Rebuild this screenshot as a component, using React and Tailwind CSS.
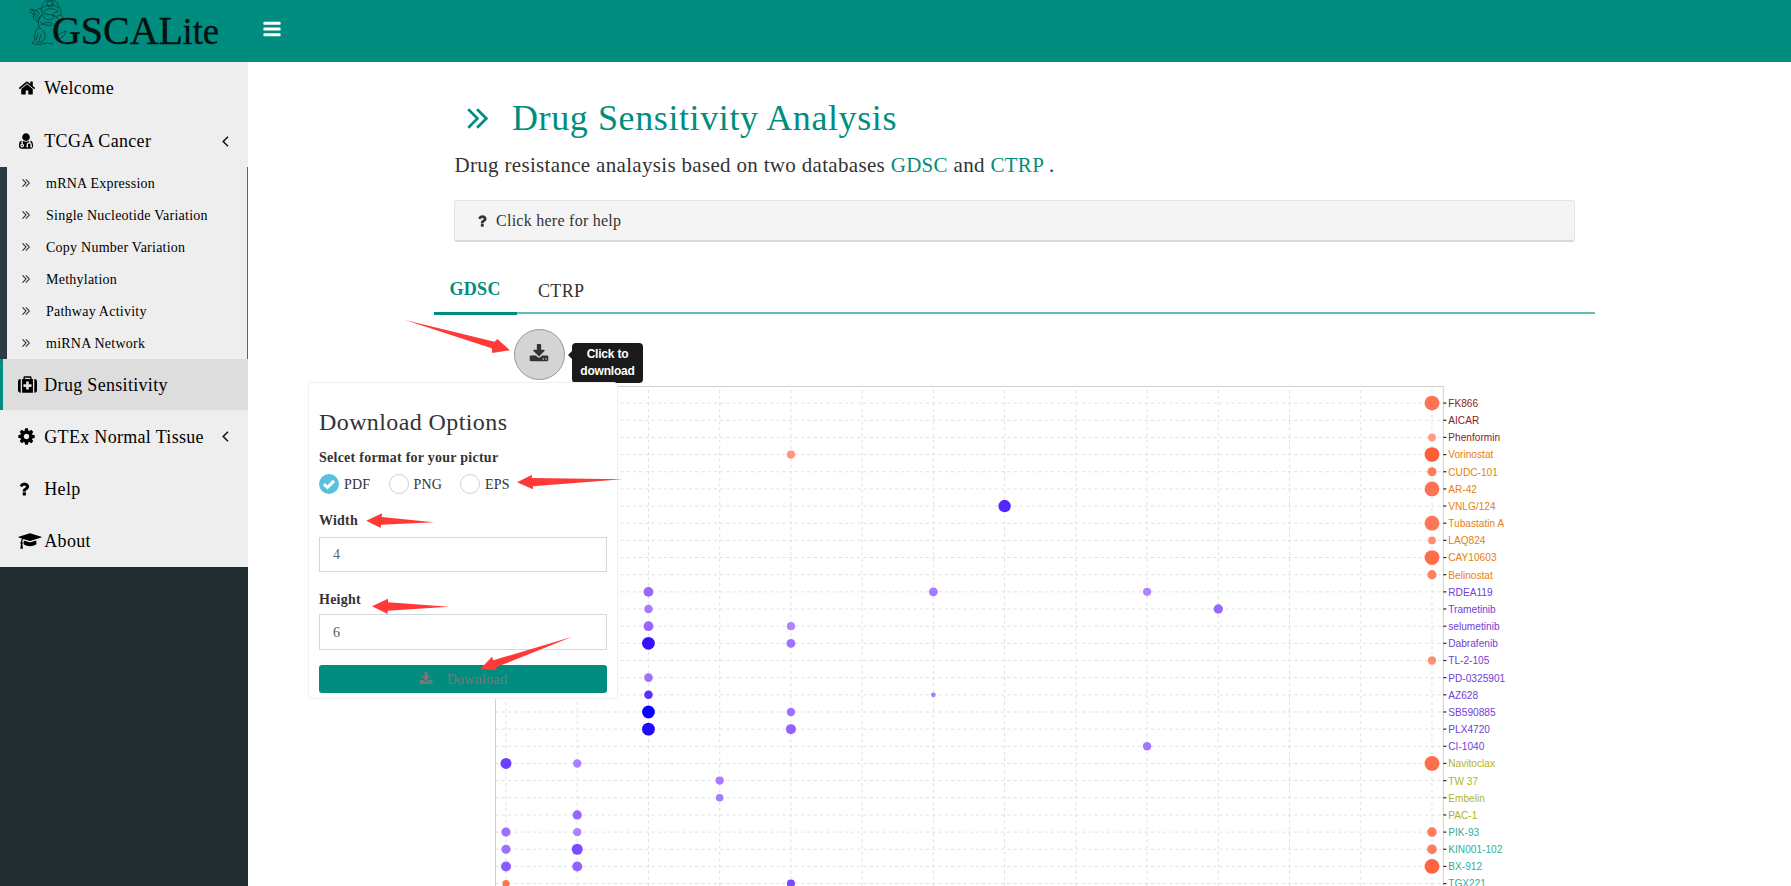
import React from 'react';

const ICONS = {
  home: ['0 0 1792 1792', 'M1472 992v480q0 26-19 45t-45 19h-384v-384h-256v384h-384q-26 0-45-19t-19-45v-480q0-1 .5-3t.5-3l575-474 575 474q1 2 1 6zm223-69l-62 74q-8 9-21 11h-3q-13 0-21-7l-692-577-692 577q-12 8-24 7-13-2-21-11l-62-74q-8-10-7-23.5t11-21.5l719-599q32-26 76-26t76 26l244 204v-195q0-14 9-23t23-9h192q14 0 23 9t9 23v408l219 182q10 8 11 21.5t-7 23.5z'],
  bars: ['0 0 1792 1792', 'M1664 1344v128q0 26-19 45t-45 19h-1408q-26 0-45-19t-19-45v-128q0-26 19-45t45-19h1408q26 0 45 19t19 45zm0-512v128q0 26-19 45t-45 19h-1408q-26 0-45-19t-19-45v-128q0-26 19-45t45-19h1408q26 0 45 19t19 45zm0-512v128q0 26-19 45t-45 19h-1408q-26 0-45-19t-19-45v-128q0-26 19-45t45-19h1408q26 0 45 19t19 45z'],
  cog: ['0 0 1792 1792', 'M1152 896q0-106-75-181t-181-75-181 75-75 181 75 181 181 75 181-75 75-181zm512-109v222q0 12-8 23t-20 13l-185 28q-19 54-39 91 35 50 107 138 10 12 10 25t-9 23q-27 37-99 108t-94 71q-12 0-26-9l-138-108q-44 23-91 38-16 136-29 186-7 28-36 28h-222q-14 0-24.5-8.5t-11.5-21.5l-28-184q-49-16-90-37l-141 107q-10 9-25 9-14 0-25-11-126-114-165-168-7-10-7-23 0-12 8-23 15-21 51-66.5t54-70.5q-27-50-41-99l-183-27q-13-2-21-12.5t-8-23.5v-222q0-12 8-23t19-13l186-28q14-46 39-92-40-57-107-138-10-12-10-24 0-10 9-23 26-36 98.5-107.5t94.5-71.5q13 0 26 10l138 107q44-23 91-38 16-136 29-186 7-28 36-28h222q14 0 24.5 8.5t11.5 21.5l28 184q49 16 90 37l142-107q9-9 24-9 13 0 25 10 129 119 165 170 7 8 7 22 0 12-8 23-15 21-51 66.5t-54 70.5q26 50 41 98l183 28q13 2 21 12.5t8 23.5z'],
  question: ['0 0 1792 1792', 'M1088 1256v240q0 16-12 28t-28 12h-240q-16 0-28-12t-12-28v-240q0-16 12-28t28-12h240q16 0 28 12t12 28zm316-600q0 54-15.5 101t-35 76.5-55 59.5-57.5 43.5-61 35.5q-41 23-68.5 65t-27.5 67q0 17-12 32.5t-28 15.5h-240q-15 0-25.5-18.5t-10.5-37.5v-45q0-83 65-156.5t143-108.5q59-27 84-56t25-76q0-42-46.5-74t-107.5-32q-65 0-108 29-35 25-107 115-13 16-31 16-12 0-25-8l-164-125q-13-10-15.5-25t5.5-28q160-266 464-266 80 0 161 31t146 83 106 127.5 41 158.5z'],
  download: ['0 0 1792 1792', 'M1344 1344q0-26-19-45t-45-19-45 19-19 45 19 45 45 19 45-19 19-45zm256 0q0-26-19-45t-45-19-45 19-19 45 19 45 45 19 45-19 19-45zm128-224v320q0 40-28 68t-68 28h-1472q-40 0-68-28t-28-68v-320q0-40 28-68t68-28h465l135 136q58 56 136 56t136-56l136-136h464q40 0 68 28t28 68zm-325-569q17 41-14 70l-448 448q-18 19-45 19t-45-19l-448-448q-31-29-14-70 17-39 59-39h256v-448q0-26 19-45t45-19h256q26 0 45 19t19 45v448h256q42 0 59 39z'],
  cap: ['0 0 2304 1792', 'M1774 836l18 316q4 69-82 128t-235 93.5-323 34.5-323-34.5-235-93.5-82-128l18-316 574 181q22 7 48 7t48-7zm530-324q0 23-22 31l-1120 352q-4 1-10 1t-10-1l-652-206q-43 34-71 111.5t-34 178.5q63 36 63 109 0 69-58 107l58 433q2 14-8 25-9 11-24 11h-192q-15 0-24-11-10-11-8-25l58-433q-58-38-58-107 0-73 65-111 11-207 98-330l-333-104q-22-8-22-31t22-31l1120-352q4-1 10-1t10 1l1120 352q22 8 22 31z'],
  doctor: ['0 0 1792 1792', 'M576 1344q0 26-19 45t-45 19-45-19-19-45 19-45 45-19 45 19 19 45zM1600 1405q0 121-73 190t-194 69h-874q-121 0-194-69t-73-190q0-68 5.5-131t24-138 47.5-132.5 81-103 120-60.5q-22 52-22 120v203q-58 20-93 70t-35 111q0 80 56 136t136 56 136-56 56-136q0-61-35.5-111t-92.5-70v-203q0-62 25-93 132 104 295 104t295-104q25 31 25 93v64q-106 0-181 75t-75 181v89q-32 29-32 71 0 40 28 68t68 28 68-28 28-68q0-42-32-71v-89q0-52 38-90t90-38 90 38 38 90v89q-32 29-32 71 0 40 28 68t68 28 68-28 28-68q0-42-32-71v-89q0-68-34.5-127.5t-93.5-93.5q0-10 .5-42.5t0-48-2.5-41.5-7-47-13-40q68 15 120 60.5t81 103 47.5 132.5 24 138 5.5 131zM1280 512q0 159-112.5 271.5t-271.5 112.5-271.5-112.5-112.5-271.5 112.5-271.5 271.5-112.5 271.5 112.5 112.5 271.5z'],
  medkit: ['0 0 1792 1792', 'M1280 1088v-192q0-14-9-23t-23-9h-224v-224q0-14-9-23t-23-9h-192q-14 0-23 9t-9 23v224h-224q-14 0-23 9t-9 23v192q0 14 9 23t23 9h224v224q0 14 9 23t23 9h192q14 0 23-9t9-23v-224h224q14 0 23-9t9-23zm-640-704h512v-128h-512v128zm-384 0v1280h-32q-92 0-158-66t-66-158v-832q0-92 66-158t158-66h32zm1152 0v1280h-1024v-1280h128v-160q0-40 28-68t68-28h576q40 0 68 28t28 68v160h128zm384 224v832q0 92-66 158t-158 66h-32v-1280h32q92 0 158 66t66 158z'],
};

function Icon({ name, className }) {
  const [viewBox, d] = ICONS[name];
  return (
    <svg viewBox={viewBox} className={className} fill="currentColor" aria-hidden="true">
      <path d={d} />
    </svg>
  );
}

function DoubleAngle({ className, stroke = 1.3 }) {
  return (
    <svg viewBox="0 0 10 10" className={className} fill="none" stroke="currentColor" strokeWidth={stroke} aria-hidden="true">
      <path d="M0.6 0.6 L5 5 L0.6 9.4 M4.8 0.6 L9.2 5 L4.8 9.4" />
    </svg>
  );
}

function AngleLeft() {
  return (
    <svg viewBox="0 0 7 11" className="h-[11px] w-[7px]" fill="none" stroke="#111" strokeWidth="1.5" aria-hidden="true">
      <path d="M6 0.7 L1.2 5.5 L6 10.3" />
    </svg>
  );
}

function Logo() {
  return (
    <svg viewBox="0 0 200 62" className="ml-[28px] h-[62px] w-[200px]" aria-label="GSCALite">
      <g fill="none" stroke="#06332e" strokeWidth="0.7" strokeLinecap="round" strokeLinejoin="round">
        <path d="M13 9 Q14 2 20 0 Q29 -1 31 7 Q34 9 33 15 Q28 18 24 15 Q17 15 14 12 Z" />
        <path d="M14 8 Q22 2 31 8 M16 11 Q22 6 30 11 M24 15 Q25 12 30 12" />
        <circle cx="22" cy="4" r="3" />
        <path d="M14 9 Q11 7 8 11 L3 9 L2 12 L6 14 L5 18 L9 22 L14 15" />
        <path d="M4 10 L10 16 M7 10 L12 14 M5 14 L10 19" />
        <path d="M12 16 Q9 21 11 27 Q5 33 7 40 L4 43 Q8 46 13 44 Q20 42 25 44" />
        <path d="M33 15 Q36 17 35 20 Q32 25 26 26 M28 17 L33 21" />
        <path d="M14 14 Q17 22 24 19 Q27 17 26 15 M13 25 Q20 20 25 24" />
        <path d="M10 27 Q18 30 17 38 Q14 44 8 42 M12 22 Q18 27 24 25 M10 33 L8 40 M13 34 L11 41" />
        <path d="M29 40 Q37 37 38 31 Q32 33 27 37" />
      </g>
      <g fontFamily="'Liberation Serif', serif" fill="#04110f" stroke="#04110f" strokeWidth="0.35">
        <text x="24" y="43.5" textLength="131" lengthAdjust="spacingAndGlyphs" fontSize="39.5">GSCAL</text>
        <text x="154.5" y="43.5" textLength="36.5" lengthAdjust="spacingAndGlyphs" fontSize="37">ite</text>
      </g>
    </svg>
  );
}

function NavItem({ icon, iconClass, label, arrow, active }) {
  return (
    <div className={active
      ? 'flex h-[51.5px] shrink-0 items-center border-l-[3px] border-[#008d80] bg-[#ddd] pl-[15px]'
      : 'flex h-[52.15px] shrink-0 items-center bg-[#eee] pl-[18px]'}>
      <span className="flex w-[26.3px] shrink-0 items-center">
        <Icon name={icon} className={iconClass} />
      </span>
      <span className="whitespace-nowrap text-[18px] leading-[24px] tracking-[0.31px]">{label}</span>
      {arrow && <span className="mr-[19.5px] ml-auto"><AngleLeft /></span>}
    </div>
  );
}

const SUB_ITEMS = ['mRNA Expression', 'Single Nucleotide Variation', 'Copy Number Variation', 'Methylation', 'Pathway Activity', 'miRNA Network'];

function Sidebar() {
  return (
    <aside className="flex w-[248px] shrink-0 flex-col bg-[#222d32] text-black">
      <NavItem icon="home" iconClass="size-[18px] shrink-0" label="Welcome" />
      <div className="bg-[#eee] pt-px">
        <NavItem icon="doctor" iconClass="-ml-px size-[18px] shrink-0" label="TCGA Cancer" arrow />
      </div>
      <ul className="h-[191.7px] shrink-0 border-r border-l-[7px] border-r-[#5a656a] border-l-[#2c3b41] bg-[#eee]">
        {SUB_ITEMS.map((item) => (
          <li key={item} className="flex h-[32px] items-center pl-[14.5px]">
            <DoubleAngle className="h-[8px] w-[8px] text-[#222]" />
            <span className="ml-[16.5px] whitespace-nowrap text-[14px] tracking-[0.24px]">{item}</span>
          </li>
        ))}
      </ul>
      <NavItem icon="medkit" iconClass="size-[19px] shrink-0" label="Drug Sensitivity" active />
      <NavItem icon="cog" iconClass="-ml-px size-[19px] shrink-0" label="GTEx Normal Tissue" arrow />
      <NavItem icon="question" iconClass="-ml-[3px] size-[18px] shrink-0" label="Help" />
      <NavItem icon="cap" iconClass="h-[18px] w-[24px] shrink-0" label="About" />
    </aside>
  );
}

const DRUGS = [
  ['FK866', '#8b1a1a'], ['AICAR', '#8b1a1a'], ['Phenformin', '#8b1a1a'],
  ['Vorinostat', '#e67f0d'], ['CUDC-101', '#e67f0d'], ['AR-42', '#e67f0d'], ['VNLG/124', '#e67f0d'],
  ['Tubastatin A', '#e67f0d'], ['LAQ824', '#e67f0d'], ['CAY10603', '#e67f0d'], ['Belinostat', '#e67f0d'],
  ['RDEA119', '#7040d8'], ['Trametinib', '#7040d8'], ['selumetinib', '#7040d8'], ['Dabrafenib', '#7040d8'],
  ['TL-2-105', '#7040d8'], ['PD-0325901', '#7040d8'], ['AZ628', '#7040d8'], ['SB590885', '#7040d8'],
  ['PLX4720', '#7040d8'], ['CI-1040', '#7040d8'],
  ['Navitoclax', '#b0b428'], ['TW 37', '#b0b428'], ['Embelin', '#b0b428'], ['PAC-1', '#b0b428'],
  ['PIK-93', '#2fae9c'], ['KIN001-102', '#2fae9c'], ['BX-912', '#2fae9c'], ['TGX221', '#2fae9c'],
];

// [column, row, radius, colour]
const DOTS = [
  [13, 0, 7.4, '#ff7352'], [13, 2, 3.9, '#ff9b80'], [13, 3, 7.4, '#ff5d3a'], [13, 4, 4.6, '#ff7d5f'],
  [13, 5, 7.4, '#ff7352'], [13, 7, 7.4, '#ff7656'], [13, 8, 3.9, '#ff8f74'], [13, 9, 7.4, '#ff6d4b'],
  [13, 10, 4.6, '#ff8062'], [13, 15, 4.2, '#ff8e72'], [13, 21, 7.4, '#ff6d4b'], [13, 25, 4.8, '#ff7d5e'],
  [13, 26, 4.8, '#ff7d5e'], [13, 27, 7.4, '#ff6341'],
  [4, 3, 4.1, '#ff957a'], [7, 6, 6.2, '#5228ff'],
  [2, 11, 4.9, '#9766ff'], [2, 12, 4.3, '#a67bff'], [2, 13, 4.9, '#9766ff'], [2, 14, 6.4, '#3712ff'],
  [2, 16, 4.3, '#9f71ff'], [2, 17, 4.3, '#5a2eff'], [2, 18, 6.4, '#0a00ff'], [2, 19, 6.4, '#220aff'],
  [4, 13, 4.1, '#ad86ff'], [4, 14, 4.4, '#9f71ff'], [4, 18, 4.2, '#9f71ff'], [4, 19, 5, '#9261ff'],
  [6, 11, 4.4, '#a67bff'], [6, 17, 2.4, '#a67bff'], [9, 11, 4.1, '#ad86ff'], [10, 12, 4.7, '#9968ff'],
  [9, 20, 4.2, '#a276ff'], [0, 21, 5.5, '#6c3eff'], [1, 21, 4.2, '#a981ff'],
  [3, 22, 4.1, '#a67cff'], [3, 23, 3.8, '#a67cff'], [1, 24, 4.6, '#9765ff'],
  [0, 25, 4.6, '#9e70ff'], [1, 25, 4.2, '#ab84ff'], [0, 26, 4.6, '#9e70ff'], [1, 26, 5.5, '#7c4bff'],
  [0, 27, 5, '#8d5cff'], [1, 27, 5, '#9462ff'], [0, 28, 3.6, '#ff7352'], [4, 28, 4, '#7948ff'],
];

const colX = (i) => 11 + i * 71.23;
const rowY = (i) => 17.1 + i * 17.16;

function BubbleChart() {
  return (
    <svg width="1040" height="500" viewBox="0 0 1040 500" className="block shrink-0">
      <g stroke="#e0e0e0" strokeDasharray="3.12 3.12" strokeWidth="1">
        {DRUGS.map(([name], i) => <line key={name} x1="0.5" x2="948" y1={rowY(i)} y2={rowY(i)} />)}
        {Array.from({ length: 14 }, (_, i) => <line key={i} x1={colX(i)} x2={colX(i)} y1="500" y2="0" />)}
      </g>
      <path d="M0.5 500 V0.5 H948.3 V500" fill="none" stroke="#cfcfcf" strokeWidth="1" />
      {DRUGS.map(([name, color], i) => (
        <g key={name}>
          <line x1="948.3" x2="951.3" y1={rowY(i)} y2={rowY(i)} stroke="#222" strokeWidth="1.2" />
          <text x="953.3" y={rowY(i) + 3.9} fill={color} fontSize="10.15" fontFamily="'Liberation Sans', sans-serif">{name}</text>
        </g>
      ))}
      {DOTS.map(([c, r, radius, color]) => <circle key={c + '-' + r} cx={colX(c)} cy={rowY(r)} r={radius} fill={color} />)}
    </svg>
  );
}

function Radio({ label, checked }) {
  return (
    <span className="flex items-center gap-[5px]">
      {checked ? (
        <svg viewBox="0 0 20 20" className="size-[20px]">
          <circle cx="10" cy="10" r="10" fill="#5bc0de" />
          <path d="M4.9 10.2 L8.4 13.5 L15 6.9" fill="none" stroke="#fff" strokeWidth="3" />
        </svg>
      ) : (
        <span className="size-[20px] rounded-full border border-[#ccd0d4] bg-white" />
      )}
      <span className="text-[14px] tracking-[0.2px]">{label}</span>
    </span>
  );
}

function DownloadPanel() {
  return (
    <section className="absolute top-[382px] left-[308px] flex h-[317px] w-[310px] flex-col rounded-[4px] border border-[#f0f0f0] bg-white px-[10px] text-[#333]">
      <h3 className="mt-[24px] text-[24px] leading-[30px] tracking-[0.4px]">Download Options</h3>
      <p className="mt-[11px] text-[14px] leading-[20px] font-bold tracking-[0.25px]">Selcet format for your pictur</p>
      <div className="mt-[6px] flex h-[20px] items-center">
        <div className="w-[69.5px]"><Radio label="PDF" checked /></div>
        <div className="w-[71.5px]"><Radio label="PNG" /></div>
        <Radio label="EPS" />
      </div>
      <label className="mt-[17px] text-[14px] leading-[20px] font-bold tracking-[0.2px]">Width</label>
      <div className="mt-[6px] flex h-[35px] shrink-0 items-center border border-[#d2d6de] pl-[13px] text-[14px] text-[#666]">4</div>
      <label className="mt-[18px] text-[14px] leading-[20px] font-bold tracking-[0.25px]">Height</label>
      <div className="mt-[4px] flex h-[36px] shrink-0 items-center border border-[#d2d6de] pl-[13px] text-[14px] text-[#555]">6</div>
      <div className="mt-[15px] flex h-[28px] shrink-0 items-center justify-center gap-[14px] rounded-[3px] bg-[#008d80] text-[14px] tracking-[0.3px] text-[#777]">
        <Icon name="download" className="size-[14px]" />
        <span>Download</span>
      </div>
    </section>
  );
}

const ARROWS = [
  '405,320 494.5,341.7 497.3,339 510,350.3 492.3,353 491.7,348.3',
  '622.3,479.3 531.7,478 532.3,474.7 517,482.3 533,489.3 533,486.3',
  '434,522.3 381.7,517 382,513.3 366.3,520.7 380.7,528 381,524.7',
  '449,606.7 388,602.3 388,598.7 372,606.3 387.7,614 387.7,610.7',
  '572.3,636.7 493.3,660.3 492,656.7 480.3,669 496.7,670.3 496,667.3',
];

export default function App() {
  return (
    <div className="relative flex h-[886px] w-[1791px] flex-col overflow-hidden bg-white font-['Liberation_Serif',serif] text-[#333]">
      <header className="flex h-[62px] shrink-0 items-center bg-[#008d80] text-white">
        <Logo />
        <Icon name="bars" className="mb-[4px] ml-[34px] size-[20px]" />
      </header>
      <div className="flex min-h-0 flex-1">
        <Sidebar />
        <main className="flex min-w-0 flex-1 flex-col">
          <h1 className="mt-[34px] ml-[219px] flex h-[44px] shrink-0 items-center text-[36px] leading-[44px] tracking-[0.6px] text-[#008d80]">
            <DoubleAngle className="h-[21px] w-[21px]" stroke={1.25} />
            <span className="ml-[24px]">Drug Sensitivity Analysis</span>
          </h1>
          <p className="mt-[10px] ml-[206.5px] shrink-0 text-[21px] leading-[30px] tracking-[0.32px]">
            Drug resistance analaysis based on two databases <span className="text-[#008d80]">GDSC</span> and <span className="text-[#008d80]">CTRP</span> .
          </p>
          <div className="mt-[20px] ml-[206px] flex h-[42px] w-[1121px] shrink-0 items-center rounded-[3px] border border-b-2 border-[#e4e4e4] border-b-[#d9d9d9] bg-[#f4f4f4] pl-[19px]">
            <Icon name="question" className="size-[16px]" />
            <span className="ml-[6px] text-[16px] tracking-[0.26px]">Click here for help</span>
          </div>
          <div className="mt-[30px] ml-[186px] flex h-[42px] w-[1161px] shrink-0 border-b-2 border-[#66bbb3] text-[18px]">
            <div className="-mb-[3px] w-[83px] border-b-[3px] border-[#008d80] pt-[4px] pl-[15.5px] leading-[26px] font-bold tracking-[0.3px] text-[#008d80]">GDSC</div>
            <div className="pt-[5.5px] pl-[21px] leading-[26px] tracking-[0.35px]">CTRP</div>
          </div>
          <div className="mt-[15px] ml-[266px] flex h-[51px] shrink-0">
            <div className="relative flex size-[51px] items-center justify-center rounded-full border border-[#999] bg-[#d4d4d4] text-[#333]">
              <Icon name="download" className="mr-px mb-px size-[20px]" />
              <div className="absolute top-[13px] left-[57px] h-[40px] w-[71px] rounded-[4px] bg-[#1a1a1a] pt-[3px] text-center font-['Liberation_Sans',sans-serif] text-[12px] leading-[17px] font-bold tracking-[-0.2px] text-white">
                Click to<br />download
                <svg viewBox="0 0 5 10" className="absolute top-[7px] -left-[4px] h-[10px] w-[5px]"><path d="M0 5 L5 0 V10 Z" fill="#1a1a1a" /></svg>
              </div>
            </div>
          </div>
          <div className="mt-[6px] ml-[247px] flex min-h-0 flex-1 overflow-hidden">
            <BubbleChart />
          </div>
        </main>
      </div>
      <DownloadPanel />
      <svg className="pointer-events-none absolute inset-0" width="1791" height="886" viewBox="0 0 1791 886" fill="#ff3a36" aria-hidden="true">
        {ARROWS.map((points) => <polygon key={points} points={points} />)}
      </svg>
    </div>
  );
}
